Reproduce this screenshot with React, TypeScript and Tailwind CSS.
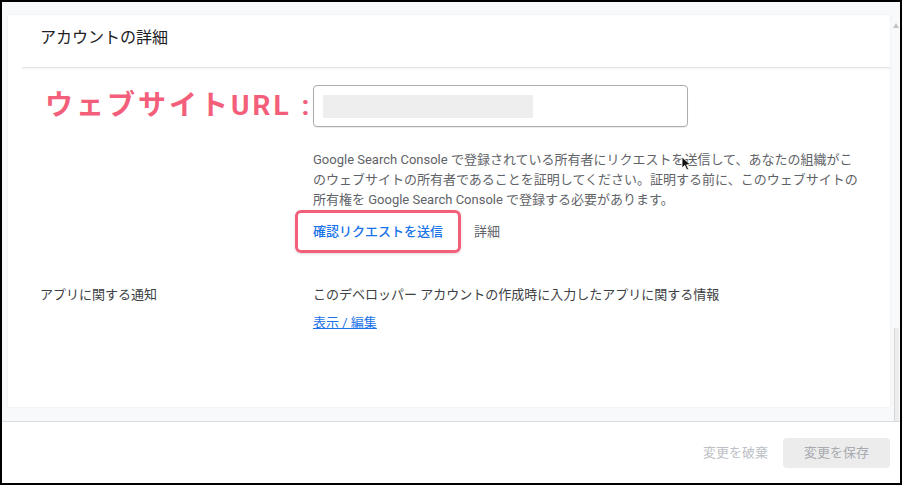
import React from 'react';

const font = { fontFamily: "Roboto, 'Noto Sans CJK JP', sans-serif" };

export default function App() {
    return (
        <div className="w-[905px] h-[488px] bg-white" style={font}>
            <div className="w-[902px] h-[485px] border-2 border-black flex flex-col">
                {/* main scroll area */}
                <div className="h-[419px] flex bg-[#f8f9fa]">
                    <div className="flex-1 pt-[13px] pl-[6px] pb-[14px]">
                        <div className="h-full bg-white shadow-[0_0_2px_rgba(0,0,0,0.08)] relative">
                            <div className="h-[52px] pt-[14px] pl-[32px] text-[16px] leading-[18px] text-[#202124]">
                                アカウントの詳細
                            </div>
                            <div className="ml-[14px] h-px bg-[#e3e3e3] shadow-[0_1px_2px_rgba(0,0,0,0.08)]" />

                            <div className="mt-[17px] flex items-center">
                                <div className="w-[305px] pl-[37px] text-[28px] leading-[32px] font-bold tracking-[3px] text-[#f35f7a] whitespace-nowrap">
                                    ウェブサイトURL :
                                </div>
                                <div className="w-[375px] h-[42px] border border-[#a9acb0] rounded-[4px] shadow-[0_1px_1px_rgba(0,0,0,0.08)] flex items-center pl-[9px]">
                                    <div className="w-[210px] h-[23px] bg-[#eeeeee]" />
                                </div>
                            </div>

                            <p className="mt-[23px] pl-[305px] text-[13px] leading-[20px] text-[#5f6368] whitespace-nowrap">
                                Google Search Console で登録されている所有者にリクエストを送信して、あなたの組織がこ
                                <br />
                                のウェブサイトの所有者であることを証明してください。証明する前に、このウェブサイトの
                                <br />
                                所有権を Google Search Console で登録する必要があります。
                            </p>

                            <div className="pl-[287px] flex items-center">
                                <button className="h-[43px] px-[15px] border-[3px] border-[#f35f7a] rounded-[6px] shadow-[0_1px_3px_rgba(0,0,0,0.15)] text-[13px] font-medium text-[#1a73e8]">
                                    確認リクエストを送信
                                </button>
                                <span className="ml-[13px] text-[13px] text-[#5f6368]">詳細</span>
                            </div>

                            <div className="mt-[32px] flex text-[13px] leading-[20px]">
                                <div className="w-[305px] pl-[32px] text-[#3c4043]">アプリに関する通知</div>
                                <div>
                                    <div className="text-[#3c4043]">このデベロッパー アカウントの作成時に入力したアプリに関する情報</div>
                                    <a className="block mt-[8px] text-[#1a73e8] underline">表示 / 編集</a>
                                </div>
                            </div>

                            {/* mouse pointer */}
                            <svg className="absolute left-[673px] top-[141px]" width="11" height="15" viewBox="0 0 11 15">
                                <path d="M1 1 L1 12 L3.8 9.4 L5.8 14 L7.6 13.2 L5.6 8.8 L9.4 8.6 Z" fill="#111" stroke="#fff" strokeWidth="0.8" />
                            </svg>
                        </div>
                    </div>
                    <div className="w-[10px] relative">
                        <svg className="absolute left-[3px] top-[21px]" width="6" height="5" viewBox="0 0 6 5">
                            <path d="M3 0 L6 5 L0 5 Z" fill="#c4c4c4" />
                        </svg>
                        <div className="absolute left-[4px] top-[326px] bottom-0 w-[5px] bg-[#ededed] border-l border-[#d6d6d6]" />
                    </div>
                </div>

                {/* footer */}
                <div className="flex-1 border-t border-[#dadce0] bg-white flex items-center justify-end gap-[15px] pr-[10px]">
                    <span className="text-[13px] text-[#bdc1c6]">変更を破棄</span>
                    <button className="w-[107px] h-[30px] rounded-[4px] bg-[#ececec] text-[13px] text-[#a7abaf]">
                        変更を保存
                    </button>
                </div>
            </div>
        </div>
    );
}
